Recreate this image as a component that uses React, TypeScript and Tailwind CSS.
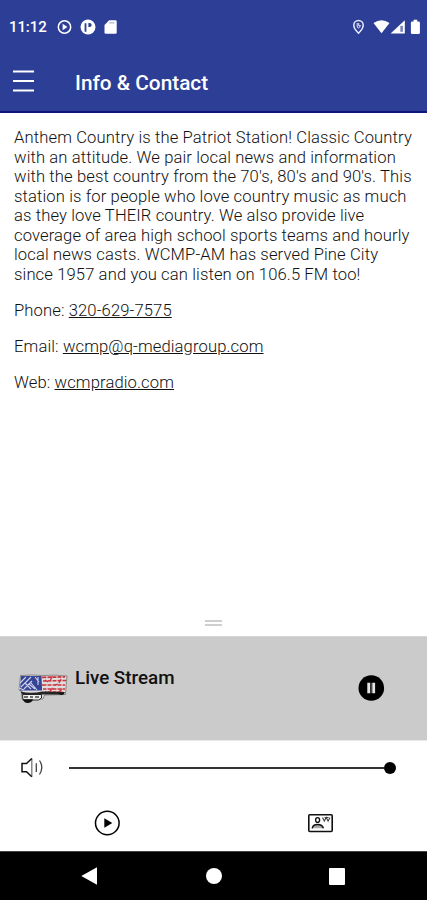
import React from "react";

const roboto = "font-['Roboto','Liberation_Sans',sans-serif]";

const lines: string[] = [
  "Anthem Country is the Patriot Station! Classic Country",
  "with an attitude. We pair local news and information",
  "with the best country from the 70's, 80's and 90's. This",
  "station is for people who love country music as much",
  "as they love THEIR country. We also provide live",
  "coverage of area high school sports teams and hourly",
  "local news casts. WCMP-AM has served Pine City",
  "since 1957 and you can listen on 106.5 FM too!",
];

function StatusBar() {
  return (
    <div className="flex h-[54px] items-center pl-[9px] text-white">
      <span className="w-[48px] pt-px text-[15px] font-medium leading-none tracking-[-0.1px]">11:12</span>
      <svg className="h-4 w-[62px]" viewBox="57 18 62 16">
        <circle cx="64.5" cy="26" r="6.2" fill="none" stroke="#fff" strokeWidth="1.5" />
        <path d="M62.6 22.8v6.4l4.8-3.2z" fill="#fff" />
        <circle cx="88" cy="26" r="7.5" fill="#fff" />
        <path d="M84.6 22.2h1.8v8.6h-1.8zM88.4 22h1q2.3 0 2.3 2t-2.3 2h-1z" fill="#2d3e96" />
        <path d="M109.2 19.3h6.2q1.3 0 1.3 1.3v10.8q0 1.3-1.3 1.3h-9.6q-1.3 0-1.3-1.3v-7.4z" fill="#fff" />
        <path d="M109.2 21.9h5.2" stroke="#8d98cc" strokeWidth=".9" />
      </svg>
      <svg className="ml-auto h-4 w-[77px]" viewBox="350 18 77 16">
        <path d="M358.5 19.5a4.7 4.7 0 0 0-4.7 4.7c0 3.4 4.7 8 4.7 8s4.7-4.6 4.7-8a4.7 4.7 0 0 0-4.7-4.7z" fill="none" stroke="#e6eaff" strokeWidth="1.5" />
        <path d="M357.2 22v4l1.3 1.3 2-2.6M358.7 22v2.7h2" fill="none" stroke="#e6eaff" strokeWidth="1" />
        <path d="M373.5 22.1q8-5.8 16 0l-8 10.1z" fill="#fff" />
        <path d="M404.8 19.2v13.3h-14.2z" fill="#fff" />
        <path d="M400.3 24.8h2.6v6h-2.6z" fill="#7782bd" />
        <path d="M413.6 18.8h3.6v1.6h1.4q1.3 0 1.3 1.3v10q0 1.3-1.3 1.3h-6.4q-1.3 0-1.3-1.3v-10q0-1.3 1.3-1.3h1.4z" fill="#fff" />
      </svg>
    </div>
  );
}

function FlagWagon() {
  return (
    <svg className="h-[32px] w-[50px]" viewBox="18 673 50 32">
      <path d="M20.5 675.5q12-1 22.5 0 12-1 24 .5l-.7 7-.8 11.5-21 .5-1.5 4H22l-.5-8-2.5-1z" fill="#dedede" stroke="#555" strokeWidth=".6" />
      <path d="M21 676h20.5l.6 14.5H20z" fill="#354497" />
      <path d="M20 683l6-6m-5 10l10-10m-7 12l8-8m3-4l4 5m-10 2l6 5m3-12v8m-13-2l6 6m-12-1l5 2m7-7l6 7" stroke="#d0d3ea" strokeWidth="1.1" />
      <path d="M42 677.3l23-.5M43 681l23-.5M42 685h23M43 689h22M45 692h18" stroke="#c9333d" strokeWidth="1.7" />
      <path d="M47 676v16m5-15v15m5-16v17m5-17v17" stroke="#ead9d9" strokeWidth="1.1" />
      <path d="M45 680l3 2m4-5l-2 4m5 4l3-1m-8 7l3-3m8-9l-2 4m3 6l-3 3" stroke="#c9333d" strokeWidth="1.3" />
      <path d="M20.5 691.5q10 2.5 22 0l22.5.5-1.5 2.5H43l-21-.5z" fill="#252323" />
      <path d="M22.5 694.5h19v3.5l-3 2H23z" fill="#eee" stroke="#252525" strokeWidth="1" />
      <path d="M24 697h4m2 0h3m2 0h4" stroke="#444" strokeWidth="1.6" />
      <path d="M23 699.2h10q-1 3.8-5.5 3.8-3.5 0-4.5-3.8z" fill="#111" />
      <path d="M58 693.5q4 3 6.5-.5z" fill="#111" />
    </svg>
  );
}

export default function App() {
  return (
    <div className={`flex h-[900px] w-[427px] flex-col overflow-hidden bg-white text-black ${roboto}`}>
      <header className="h-[113px] shrink-0 border-b-2 border-[#10177c] bg-[#2d3e96]">
        <StatusBar />
        <div className="flex h-[57px] items-center pl-[13px]">
          <svg className="-mt-[3px] h-6 w-[21px]" viewBox="0 0 21 24">
            <path d="M0 2.5h21M0 12h21M0 21.5h21" stroke="#fff" strokeWidth="2" />
          </svg>
          <h1 className="ml-[41px] pt-px text-[20.8px] font-medium leading-none text-white">Info &amp; Contact</h1>
        </div>
      </header>

      <main className="flex-1 pl-[14px] pt-[15px] text-[16.6px] font-light leading-[19.5px] tracking-[0.12px] text-[#111]">
        <p>
          {lines.map((line) => (
            <span key={line} className="block whitespace-nowrap">{line}</span>
          ))}
        </p>
        <p className="mt-[16.7px]">Phone: <a className="underline">320-629-7575</a></p>
        <p className="mt-[16.7px]">Email: <a className="underline">wcmp@q-mediagroup.com</a></p>
        <p className="mt-[16.7px]">Web: <a className="underline">wcmpradio.com</a></p>
      </main>

      <div className="flex h-[17px] shrink-0 flex-col items-center gap-[2px]">
        <div className="mt-[1px] h-[2px] w-[17px] bg-[#cfcfcf]" />
        <div className="h-[2px] w-[17px] bg-[#cfcfcf]" />
      </div>

      <section className="flex h-[105px] shrink-0 items-start border-b border-t border-b-[#e8e8e8] border-t-[#d6d6d6] bg-[#cbcbcb] pl-[18px]">
        <div className="pt-[36px]"><FlagWagon /></div>
        <h2 className="ml-[7px] mt-[31px] text-[18.8px] font-medium leading-[20px] text-[#111]">Live Stream</h2>
        <svg className="ml-auto mr-[42px] mt-[38px] h-[27px] w-[27px]" viewBox="0 0 27 27">
          <circle cx="13.3" cy="13" r="12.8" fill="#000" />
          <path d="M10.7 7.7v10.6M15.7 7.7v10.6" stroke="#e5e5e5" strokeWidth="2.8" />
          <path d="M13.2 7.7v10.6" stroke="#555" strokeWidth="1.3" />
        </svg>
      </section>

      <div className="flex h-[54px] shrink-0 items-center pl-[20px]">
        <svg className="h-6 w-6" viewBox="20 756 24 24" fill="none" stroke="#111" strokeWidth="1.3">
          <path d="M31.8 758.5v18.2" stroke="#777" />
          <path d="M31.8 758.5l-5.3 5H22v8.2h4.5l5.3 5" strokeWidth="1.5" />
          <path d="M36.3 763.2v8.8" stroke="#444" />
          <path d="M39.5 760.5q4.6 7 0 14" stroke="#444" />
        </svg>
        <div className="ml-[25px] flex w-[327px] items-center">
          <div className="h-[2px] flex-1 bg-[#333]" />
          <div className="h-[12px] w-[12px] rounded-full bg-black" />
        </div>
      </div>

      <div className="flex h-[56px] shrink-0 items-center justify-around">
        <svg className="h-[26px] w-[26px]" viewBox="0 0 26 26">
          <circle cx="13.3" cy="13" r="11.8" fill="none" stroke="#000" strokeWidth="1.5" />
          <path d="M10.3 8.3v9.4l8-4.7z" />
        </svg>
        <svg className="h-[26px] w-[26px]" viewBox="0 0 26 26">
          <rect x="1.8" y="4.7" width="23.4" height="16.8" rx="1" fill="none" stroke="#111" strokeWidth="1.6" />
          <ellipse cx="10.6" cy="10" rx="2" ry="2.4" fill="none" stroke="#111" strokeWidth="1.4" />
          <path d="M5.2 18.3q.7-3.8 5.4-3.8t5.8 3.8" fill="#aaa" stroke="#111" strokeWidth="1.5" />
          <path d="M15.5 7.5l1.8 3.6 1.9-3.6 1.9 3.6 1.9-3.6M17.5 7.5h4" fill="none" stroke="#444" strokeWidth="1.1" />
        </svg>
      </div>

      <nav className="flex h-[49px] shrink-0 items-center justify-between border-t border-[#444] bg-black pl-[81px] pr-[82px]">
        <svg className="h-[18px] w-4" viewBox="0 0 16 18"><path d="M16 .2v17.6L.3 9z" fill="#fff" /></svg>
        <div className="ml-px h-4 w-4 rounded-full bg-white" />
        <div className="h-[17px] w-4 rounded-[1px] bg-white" />
      </nav>
    </div>
  );
}
